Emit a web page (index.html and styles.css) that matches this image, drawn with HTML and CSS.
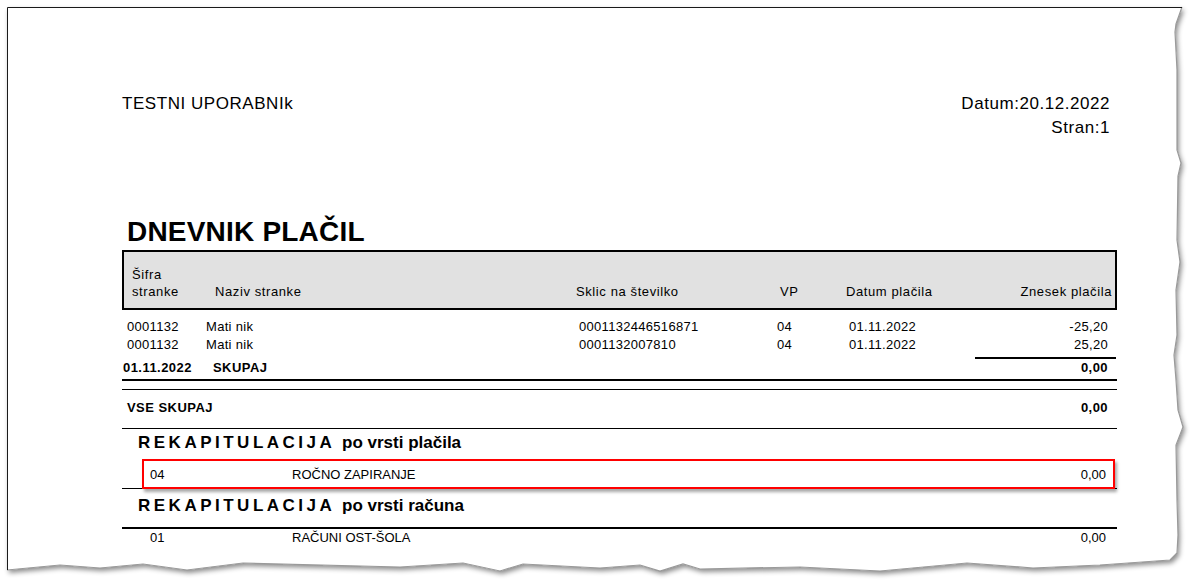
FILE: index.html
```html
<!DOCTYPE html>
<html lang="sl">
<head>
<meta charset="utf-8">
<title>Dnevnik plačil</title>
<link rel="stylesheet" href="styles.css">
</head>
<body>
<svg class="paper" width="1194" height="585" viewBox="0 0 1194 585" aria-hidden="true">
  <defs>
    <filter id="shadow" x="-5%" y="-5%" width="110%" height="115%">
      <feDropShadow dx="2" dy="3" stdDeviation="2.5" flood-color="#000" flood-opacity="0.45"/>
    </filter>
  </defs>
  <path filter="url(#shadow)" fill="#fff" d="M7,7 L1182,7 L1176,24 L1175,32 L1177,70 L1177,150 L1181,163 L1178,176 L1177,240 L1180,262 L1176,290 L1177,335 L1174,355 L1176,380 L1178,410 L1183,427 L1176,445 L1177,500 L1178,535 L1177,553 L1170,560 L1100,565 L1033,568 L967,563 L880,571 L800,567 L700,569 L683,564 L660,571 L640,565 L600,568 L523,564 L500,571 L463,563 L400,567 L243,563 L187,570 L143,564 L100,568 L60,565 L7,570 Z"/>
  <path fill="none" stroke="#9a9a9a" stroke-width="1.2" d="M1182,7 L1176,24 L1175,32 L1177,70 L1177,150 L1181,163 L1178,176 L1177,240 L1180,262 L1176,290 L1177,335 L1174,355 L1176,380 L1178,410 L1183,427 L1176,445 L1177,500 L1178,535 L1177,553 L1170,560 L1100,565 L1033,568 L967,563 L880,571 L800,567 L700,569 L683,564 L660,571 L640,565 L600,568 L523,564 L500,571 L463,563 L400,567 L243,563 L187,570 L143,564 L100,568 L60,565 L7,570"/>
  <path fill="none" stroke="#1a1a1a" stroke-width="1" d="M7.5,570 L7.5,7.5 L1182,7.5"/>
</svg>

<main class="report">
  <header class="top">
    <div class="user">TESTNI UPORABNIk</div>
    <div class="meta">
      <div>Datum:20.12.2022</div>
      <div>Stran:1</div>
    </div>
  </header>

  <h1 class="title">DNEVNIK PLAČIL</h1>

  <div class="thead">
    <div>Šifra<br>stranke</div>
    <div>Naziv stranke</div>
    <div>Sklic na številko</div>
    <div>VP</div>
    <div>Datum plačila</div>
    <div class="num">Znesek plačila</div>
  </div>

  <div class="rows">
    <div class="row">
      <span>0001132</span><span>Mati nik</span><span>0001132446516871</span><span>04</span><span>01.11.2022</span><span class="num">-25,20</span>
    </div>
    <div class="row">
      <span>0001132</span><span>Mati nik</span><span>0001132007810</span><span>04</span><span>01.11.2022</span><span class="num">25,20</span>
    </div>
  </div>

  <div class="subline"></div>
  <div class="subtotal">
    <span class="sub-date">01.11.2022</span><span class="sub-label">SKUPAJ</span><span class="num">0,00</span>
  </div>

  <div class="double"></div>

  <div class="grand">
    <span class="grand-label">VSE SKUPAJ</span><span class="num">0,00</span>
  </div>

  <h2 class="recap-title"><span class="spaced">REKAPITULACIJA</span> po vrsti plačila</h2>
  <div class="recap-wrap">
    <div class="recap-row highlight">
      <span class="code">04</span><span class="name">ROČNO ZAPIRANJE</span><span class="num">0,00</span>
    </div>
  </div>

  <h2 class="recap-title second"><span class="spaced">REKAPITULACIJA</span> po vrsti računa</h2>
  <div class="recap-row plain">
    <span class="code">01</span><span class="name">RAČUNI OST-ŠOLA</span><span class="num">0,00</span>
  </div>
</main>
</body>
</html>
```

FILE: styles.css
```css
html, body {
  margin: 0;
  padding: 0;
}

body {
  width: 1194px;
  height: 585px;
  overflow: hidden;
  background: #fff;
  position: relative;
  font-family: "Liberation Sans", Arial, sans-serif;
  color: #000;
}

.paper {
  position: absolute;
  left: 0;
  top: 0;
  z-index: 0;
}

.report {
  position: relative;
  z-index: 1;
  margin-left: 122px;
  width: 995px;
  padding-top: 92px;
}

.top {
  display: flex;
  justify-content: space-between;
  font-size: 17px;
  letter-spacing: 0.55px;
  line-height: 24px;
  padding-right: 7px;
}

.meta {
  text-align: right;
}

.title {
  margin: 76px 0 0 5px;
  font-size: 28px;
  font-weight: bold;
  line-height: 32px;
  letter-spacing: 0.2px;
}

.thead {
  margin-top: 2px;
  height: 60px;
  box-sizing: border-box;
  border: 2px solid #000;
  background: #e1e1e1;
  display: grid;
  grid-template-columns: 83px 361px 204px 66px 1fr auto;
  align-items: end;
  padding: 0 3px 8px 8px;
  font-size: 13px;
  letter-spacing: 0.6px;
  line-height: 17px;
}

.num {
  text-align: right;
}

.rows {
  margin-top: 8px;
}

.row {
  display: grid;
  grid-template-columns: 79px 373px 198px 72px 1fr auto;
  padding: 0 9px 0 5px;
  font-size: 13px;
  letter-spacing: 0.3px;
  line-height: 18px;
}

.subline {
  margin: 3px 1px 0 auto;
  width: 141px;
  height: 2px;
  background: #000;
}

.subtotal,
.grand {
  display: flex;
  font-size: 13px;
  font-weight: bold;
  letter-spacing: 0.45px;
  line-height: 18px;
  padding-right: 9px;
}

.subtotal {
  padding-left: 1px;
}

.sub-date {
  width: 90px;
}

.sub-label,
.grand-label {
  flex: 1;
}

.double {
  margin-top: 2px;
  height: 8px;
  border-top: 2px solid #000;
  border-bottom: 1px solid #000;
}

.grand {
  margin-top: 9px;
  padding-left: 5px;
  padding-bottom: 11px;
  border-bottom: 1px solid #000;
}

.recap-title {
  margin: 4px 0 0 0;
  padding-left: 16px;
  font-size: 17px;
  font-weight: bold;
  line-height: 20px;
}

.spaced {
  letter-spacing: 3.5px;
  margin-right: 2px;
}

.recap-wrap {
  padding: 6px 2px 0 20px;
  border-bottom: 1px solid #000;
}

.recap-row {
  display: flex;
  font-size: 13px;
  line-height: 18px;
}

.recap-row .code {
  width: 142px;
}

.recap-row .name {
  flex: 1;
}

.highlight {
  position: relative;
  height: 30px;
  box-sizing: border-box;
  border: 2px solid #f00;
  padding: 5px 7px 0 6px;
  margin-bottom: -1px;
  background: #fff;
  box-shadow: 2px 3px 3px rgba(0, 0, 0, 0.35);
}

.recap-title.second {
  margin-top: 7px;
  padding-bottom: 11px;
  border-bottom: 2px solid #000;
}

.plain {
  padding: 0 11px 0 28px;
}
```
